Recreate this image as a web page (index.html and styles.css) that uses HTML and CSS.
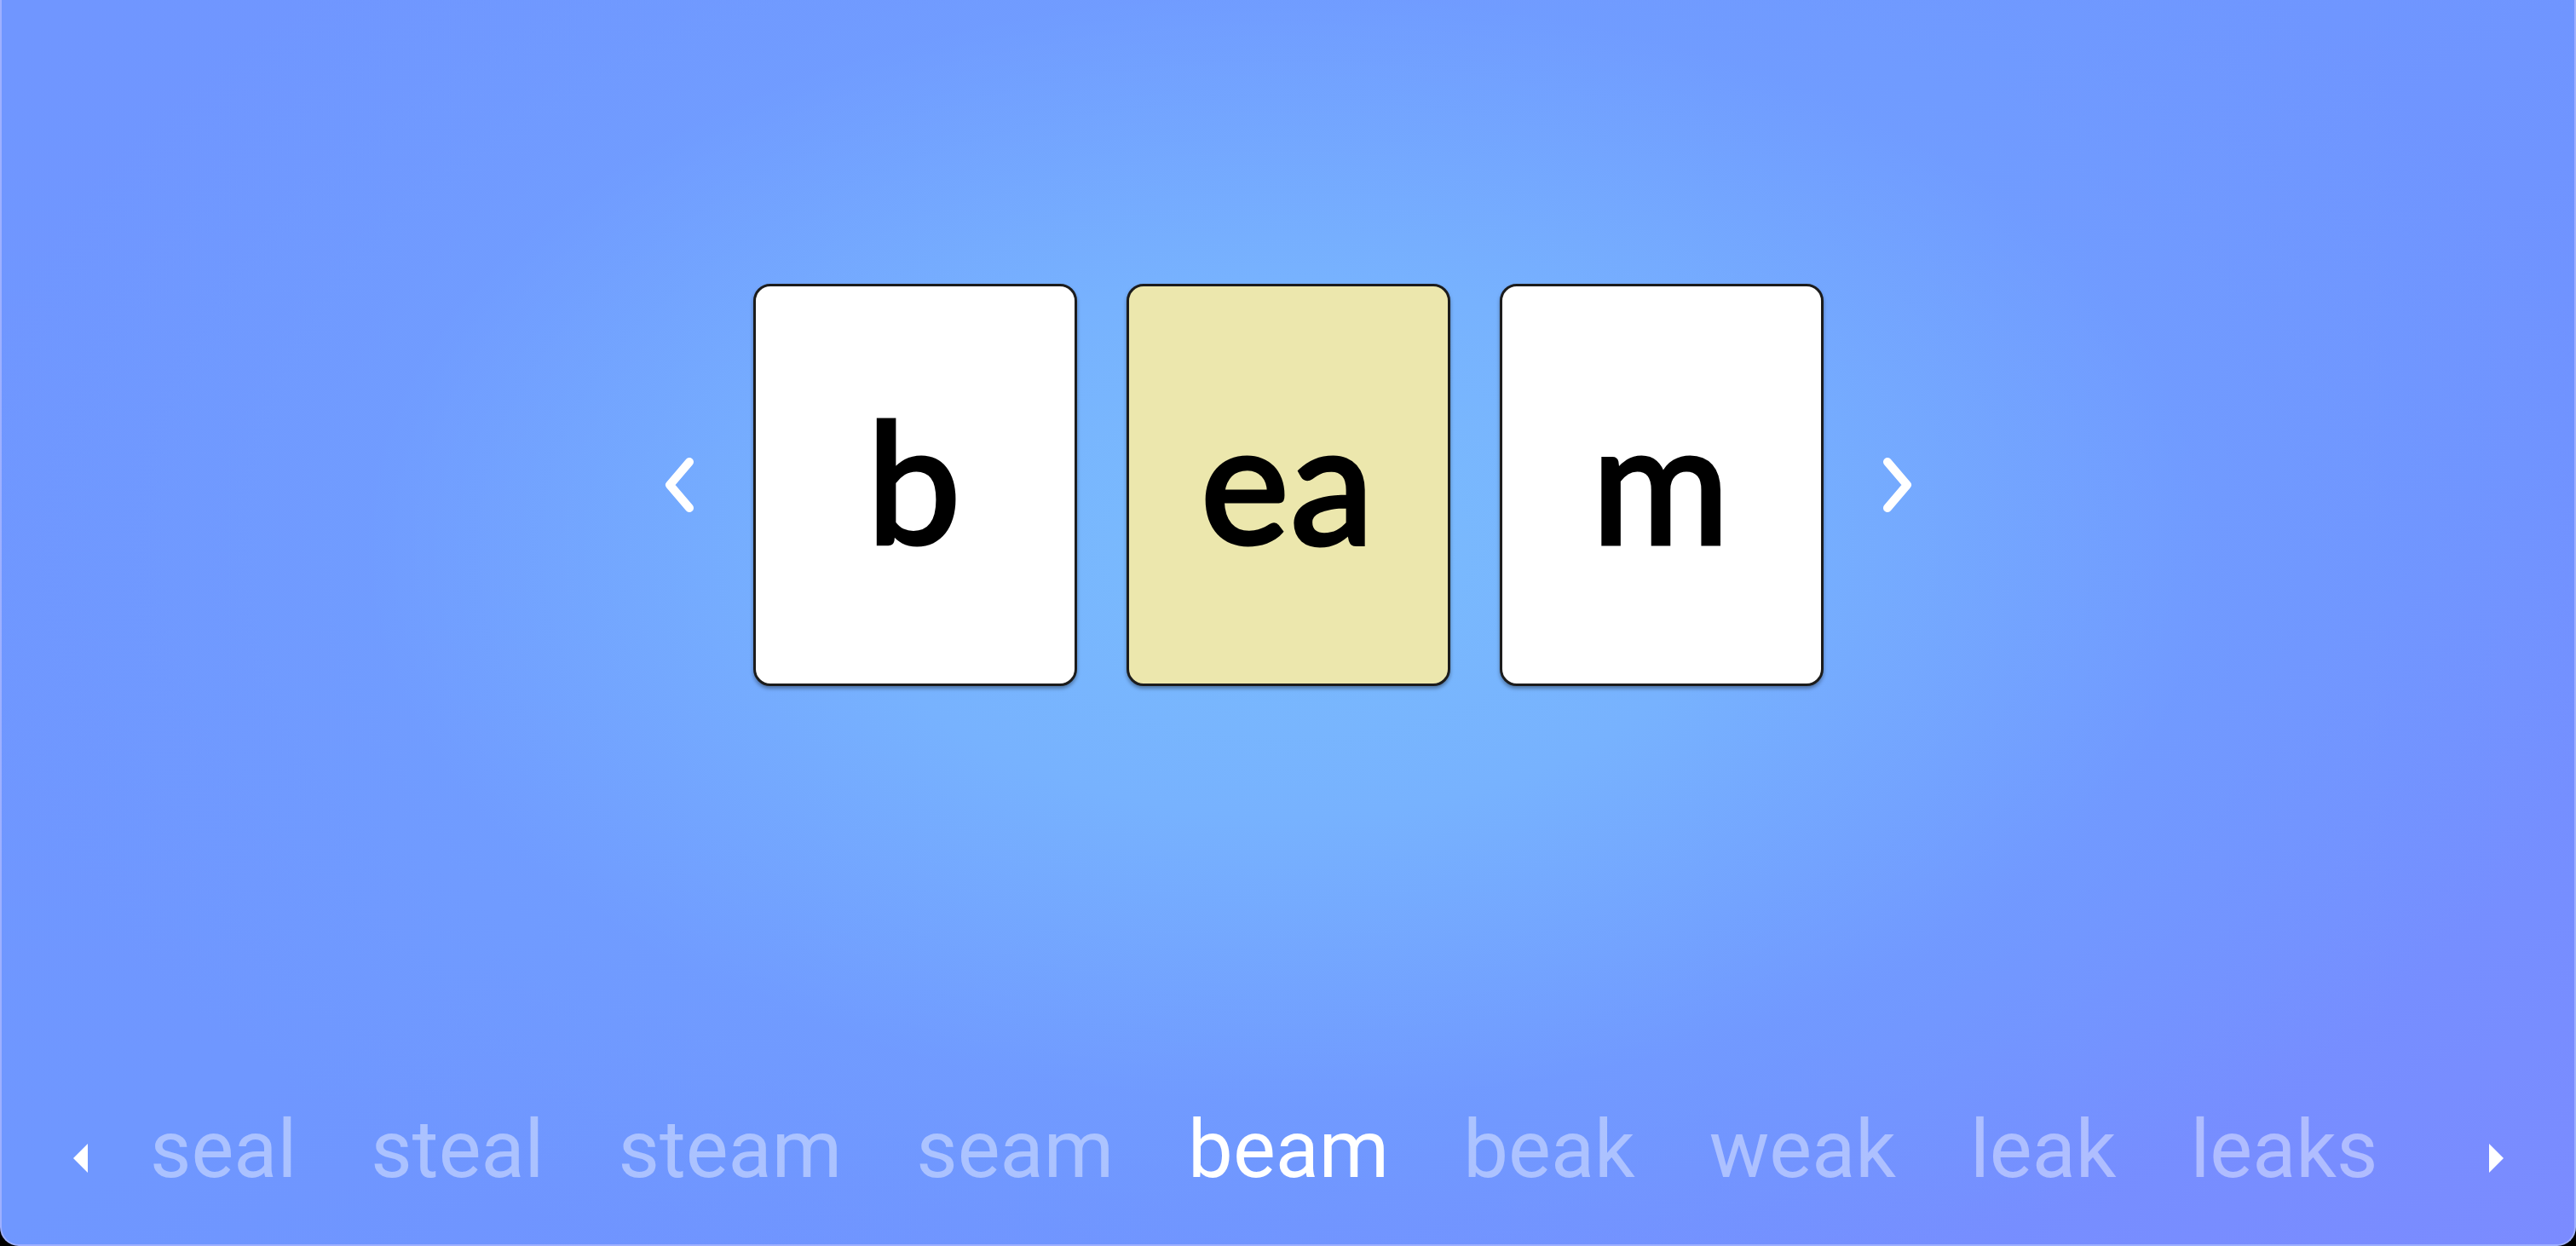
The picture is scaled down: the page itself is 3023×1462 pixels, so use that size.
FILE: index.html
```html
<!DOCTYPE html>
<html lang="en">
<head>
<meta charset="utf-8">
<title>beam</title>
<link rel="stylesheet" href="styles.css">
</head>
<body>
<div class="frame">
  <div class="stage">
    <button class="chev chev-left" aria-label="Previous">
      <svg width="36" height="66" viewBox="0 0 36 66"><path d="M30 6 L7 33 L30 60" fill="none" stroke="#fff" stroke-width="10" stroke-linecap="round" stroke-linejoin="round"/></svg>
    </button>
    <div class="cards">
      <div class="card"><span class="glyph">b</span></div>
      <div class="card card-active"><span class="glyph">ea</span></div>
      <div class="card"><span class="glyph">m</span></div>
    </div>
    <button class="chev chev-right" aria-label="Next">
      <svg width="36" height="66" viewBox="0 0 36 66"><path d="M6 6 L29 33 L6 60" fill="none" stroke="#fff" stroke-width="10" stroke-linecap="round" stroke-linejoin="round"/></svg>
    </button>
  </div>
  <div class="wordbar">
    <button class="tri tri-left" aria-label="Scroll left">
      <svg width="18" height="34" viewBox="0 0 18 34"><path d="M17 0 L0 17 L17 34 Z" fill="#fff"/></svg>
    </button>
    <div class="words">
      <span class="word">seal</span>
      <span class="word">steal</span>
      <span class="word">steam</span>
      <span class="word">seam</span>
      <span class="word word-active">beam</span>
      <span class="word">beak</span>
      <span class="word">weak</span>
      <span class="word">leak</span>
      <span class="word">leaks</span>
    </div>
    <button class="tri tri-right" aria-label="Scroll right">
      <svg width="18" height="34" viewBox="0 0 18 34"><path d="M1 0 L18 17 L1 34 Z" fill="#fff"/></svg>
    </button>
  </div>
</div>
</body>
</html>
```
FILE: styles.css
```css
html, body {
  margin: 0;
  padding: 0;
  background: #000;
}
.frame {
  box-sizing: border-box;
  width: 3023px;
  height: 1462px;
  display: flex;
  flex-direction: column;
  border: 2px solid #9eb0ff;
  border-top: none;
  border-radius: 0 0 22px 22px;
  overflow: hidden;
  background:
    radial-gradient(ellipse 58% 72% at 50% 44%, #7abcfd 0%, #77b2fe 30%, rgba(113, 159, 255, 0.6) 62%, rgba(111, 150, 255, 0) 90%),
    linear-gradient(150deg, #7096ff 0%, #6f97ff 45%, #7092ff 70%, #7b8bff 100%);
  font-family: Roboto, "Liberation Sans", sans-serif;
}
.stage {
  flex: 0 0 1138px;
  display: flex;
  align-items: center;
  justify-content: center;
}
.chev {
  background: none;
  border: none;
  padding: 0;
  display: flex;
  width: 36px;
  height: 66px;
}
.chev-left { margin-right: 69px; }
.chev-right { margin-left: 69px; }
.cards {
  display: flex;
  gap: 58px;
}
.card {
  box-sizing: border-box;
  width: 380px;
  height: 472px;
  background: #fff;
  border: 3px solid #1c1c1c;
  border-radius: 20px;
  box-shadow: 0 3px 4px rgba(0, 0, 0, 0.35);
  display: flex;
  align-items: center;
  justify-content: center;
  padding-bottom: 12px;
}
.card-active {
  background: #ece7ad;
}
.glyph {
  font-family: Lato, "Noto Sans", sans-serif;
  font-weight: 400;
  font-size: 196px;
  line-height: 1;
  color: #000;
  letter-spacing: 2px;
  -webkit-text-stroke: 5px #000;
}
.wordbar {
  flex: 1;
  display: flex;
  align-items: flex-end;
  padding: 0 83px 55px 84px;
}
.tri {
  background: none;
  border: none;
  padding: 0;
  display: flex;
  width: 18px;
  height: 34px;
  align-self: flex-end;
  margin-bottom: 29px;
}
.tri-right { margin-left: auto; }
.words {
  display: flex;
  gap: 87px;
  margin-left: 72px;
}
.word {
  font-size: 94px;
  line-height: 1.17;
  color: rgba(255, 255, 255, 0.42);
}
.word-active {
  color: #fff;
}
```
